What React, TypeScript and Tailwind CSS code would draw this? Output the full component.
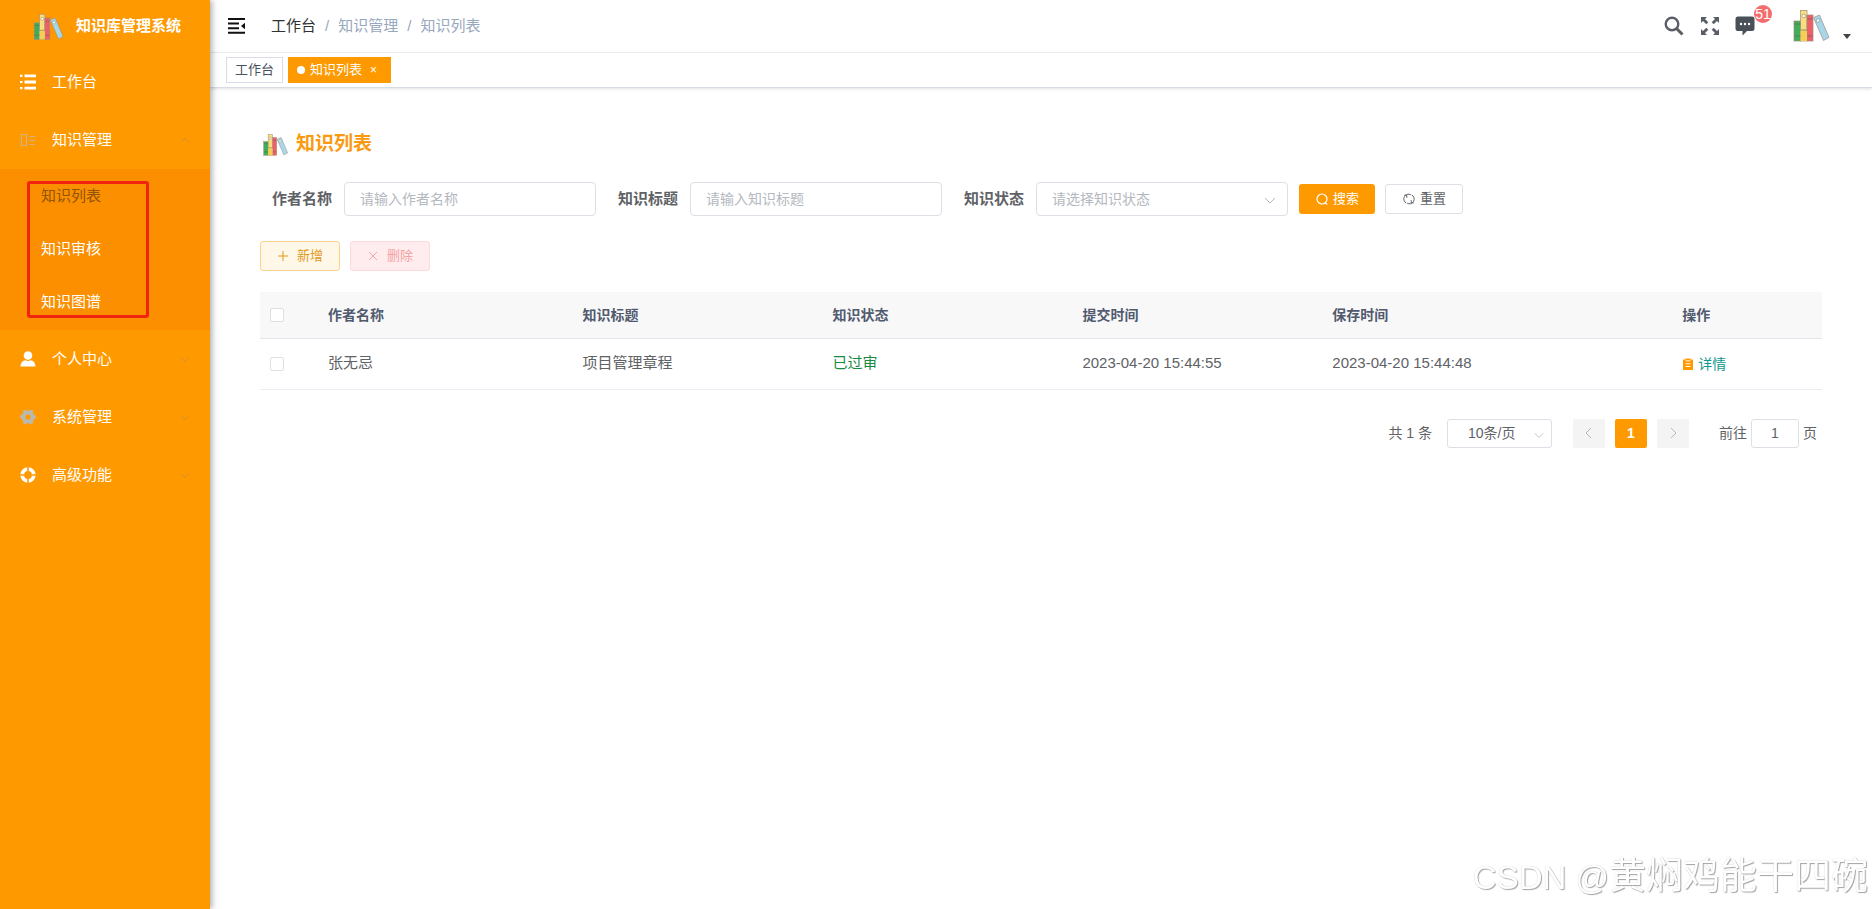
import { useState, type ReactNode } from "react";

function Books({ className }: { className: string }) {
  return (
    <svg viewBox="0 0 38 34" className={className} aria-hidden="true">
      <g stroke="#a08c7a" strokeWidth="0.7">
        <rect x="1" y="12" width="7" height="20" fill="#3fae5a" />
        <rect x="7.500" y="1.500" width="6.500" height="30.500" fill="#f7de7e" />
        <rect x="14" y="6" width="6" height="26" fill="#ee5f68" />
        <path d="M20.500 8.500 26.500 6l9.500 22.500-5.500 3Z" fill="#a6d8ea" />
      </g>
      <path d="M7.500 22h6.500v10H7.500Z" fill="#f3cf55" />
      <path d="M1.500 15h6M1.500 27h6M8 21h5.500M14.500 27h5M14.500 10h5" stroke="#6b6259" strokeWidth="0.700" />
      <circle cx="10.700" cy="7" r="1.800" fill="#fff" stroke="#a08c5a" strokeWidth="0.700" />
      <circle cx="25" cy="11.500" r="1.800" fill="#fff" stroke="#6d95a5" strokeWidth="0.700" />
    </svg>
  );
}

function ListIcon() {
  return (
    <svg viewBox="0 0 16 16" className="size-4" fill="#fff" aria-hidden="true">
      <path d="M0 .8h2.500v2.200H0zM4.500 .5h11.500v2.800H4.500zM0 6.900h2.500v2.200H0zM4.500 6.600h11.500v2.800H4.500zM0 13h2.500v2.200H0zM4.500 12.700h11.500v2.800H4.500z" />
    </svg>
  );
}

function PanelIcon() {
  return (
    <svg viewBox="0 0 16 16" className="size-4" fill="none" stroke="#d2b184" strokeWidth="1.200" aria-hidden="true">
      <path d="M1.500 2.500h5v11h-5zM9.500 4.500H15M9.500 8.500H15M9.500 12.500H15" />
    </svg>
  );
}

function UserIcon() {
  return (
    <svg viewBox="0 0 16 16" className="size-4" fill="#fff" aria-hidden="true">
      <circle cx="8" cy="4.500" r="4.300" />
      <path d="M.5 15.500c0-4 2.500-6 5-6.300 1.500 1 3.500 1 5 0 2.500.3 5 2.300 5 6.300Z" />
    </svg>
  );
}

function GearIcon() {
  return (
    <svg viewBox="0 0 16 16" className="size-4" aria-hidden="true">
      <circle cx="8" cy="8" r="4.500" fill="none" stroke="#b9b9ae" strokeWidth="4" />
      <circle cx="8" cy="8" r="6.600" fill="none" stroke="#b9b9ae" strokeWidth="2.400" strokeDasharray="3.456" strokeDashoffset="1.728" />
    </svg>
  );
}

function BuoyIcon() {
  return (
    <svg viewBox="0 0 16 16" className="size-4" aria-hidden="true">
      <circle cx="8" cy="8" r="5.800" fill="none" stroke="#fff" strokeWidth="3.800" />
      <path d="M8 0v4M8 12v4M0 8h4M12 8h4" stroke="#ff9900" strokeWidth="1.600" />
    </svg>
  );
}

function Chevron({ dir, className }: { dir: "up" | "down" | "left" | "right"; className: string }) {
  const paths = {
    up: "M1 9l5-5 5 5",
    down: "M1 4l5 5 5-5",
    left: "M8 1L3 6l5 5",
    right: "M4 1l5 5-5 5",
  };
  return (
    <svg viewBox="0 0 12 12" className={className} fill="none" stroke="currentColor" aria-hidden="true">
      <path d={paths[dir]} />
    </svg>
  );
}

function MenuRow({ icon, label, arrow }: { icon: ReactNode; label: string; arrow?: "up" | "down" }) {
  return (
    <a href="#" className="flex h-[58px] items-center px-5 text-[15px] text-white">
      <span className="mr-4 flex w-4 justify-center">{icon}</span>
      <span className="flex-1">{label}</span>
      {arrow && <Chevron dir={arrow} className="size-2.5 text-[#c99238]" />}
    </a>
  );
}

function Sidebar() {
  return (
    <aside className="z-10 w-[210px] shrink-0 bg-[#ff9900] shadow-[2px_0_6px_rgba(0,21,41,0.35)]">
      <a href="#" className="flex h-[53px] items-center pl-[33px] text-white">
        <Books className="mr-[11px] h-7 w-8" />
        <span className="text-[15px] font-bold">知识库管理系统</span>
      </a>
      <nav>
        <MenuRow icon={<ListIcon />} label="工作台" />
        <MenuRow icon={<PanelIcon />} label="知识管理" arrow="up" />
        <div className="relative bg-[#fb8f00] py-px text-[15px] text-white">
          <a href="#" className="flex h-[53px] items-center pl-[41px] text-[#8f5405]">知识列表</a>
          <a href="#" className="flex h-[53px] items-center pl-[41px]">知识审核</a>
          <a href="#" className="flex h-[53px] items-center pl-[41px]">知识图谱</a>
          <div className="pointer-events-none absolute top-3 left-[27px] h-[137px] w-[122px] rounded-[3px] border-3 border-[#f0240f]" />
        </div>
        <MenuRow icon={<UserIcon />} label="个人中心" arrow="down" />
        <MenuRow icon={<GearIcon />} label="系统管理" arrow="down" />
        <MenuRow icon={<BuoyIcon />} label="高级功能" arrow="down" />
      </nav>
    </aside>
  );
}

function TopBar() {
  return (
    <header className="flex h-[53px] items-center border-b border-[#f0f0f0] pr-[21px] pl-[18px]">
      <button aria-label="折叠菜单">
        <svg viewBox="0 0 18 16" className="h-4 w-[18px]" fill="#111" aria-hidden="true">
          <path d="M0 0h17v2H0zM0 4.600h11v2H0zM0 9.200h11v2H0zM0 13.800h17v2H0zM17 4.800v6.400L13 8z" />
        </svg>
      </button>
      <nav className="ml-[25px] flex items-center gap-[9px] text-[15px] text-[#97a8be]">
        <a href="#" className="text-[#303133]">工作台</a>
        <span>/</span>
        <span>知识管理</span>
        <span>/</span>
        <span>知识列表</span>
      </nav>
      <div className="ml-auto flex items-center text-[#5a5e66]">
        <button aria-label="搜索">
          <svg viewBox="0 0 20 20" className="size-5" fill="none" stroke="currentColor" aria-hidden="true">
            <circle cx="8" cy="8" r="6.300" strokeWidth="2.400" />
            <path d="M12.500 12.500l6 6" strokeWidth="3" />
          </svg>
        </button>
        <button aria-label="全屏" className="ml-4">
          <svg viewBox="0 0 20 20" className="size-5" fill="currentColor" aria-hidden="true">
            <path d="M1 1h6L5 3l3.300 3.300-2 2L3 5 1 7zM19 1v6l-2-2-3.300 3.300-2-2L15 3l-2-2zM1 19v-6l2 2 3.300-3.300 2 2L5 17l2 2zM19 19h-6l2-2-3.300-3.300 2-2L17 15l2-2z" />
          </svg>
        </button>
        <button aria-label="消息" className="relative ml-[15px]">
          <svg viewBox="0 0 20 20" className="size-5" aria-hidden="true">
            <path d="M3 .5h14a2.500 2.500 0 0 1 2.500 2.500v9.500A2.500 2.500 0 0 1 17 15h-5l-4.500 4.500V15H3A2.500 2.500 0 0 1 .5 12.500V3A2.500 2.500 0 0 1 3 .5Z" fill="#4a5058" />
            <g fill="#fff">
              <circle cx="6" cy="8" r="1.200" />
              <circle cx="10" cy="8" r="1.200" />
              <circle cx="14" cy="8" r="1.200" />
            </g>
          </svg>
          <span className="absolute -top-[11px] left-[19px] flex size-[18px] items-center justify-center rounded-full bg-[#f56c6c] text-sm text-white">51</span>
        </button>
        <button aria-label="用户菜单" className="ml-[38px] flex items-end gap-3">
          <Books className="h-[34px] w-[38px]" />
          <svg viewBox="0 0 8 5" className="mb-1 h-[5px] w-2" fill="#444" aria-hidden="true">
            <path d="M0 0h8L4 5z" />
          </svg>
        </button>
      </div>
    </header>
  );
}

function Tabs() {
  return (
    <div className="flex h-[35px] items-center gap-[5px] border-b border-[#d8dce5] pl-4 text-[13px] shadow-[0_1px_3px_rgba(0,0,0,0.12)]">
      <a href="#" className="flex h-[26px] items-center border border-[#d8dce5] px-2 text-[#495060]">工作台</a>
      <a href="#" className="flex h-[26px] items-center bg-[#ff9900] pr-3.5 pl-[9px] text-white">
        <span className="mr-[5px] size-2 rounded-full bg-white" />
        知识列表
        <span className="ml-2 text-xs">×</span>
      </a>
    </div>
  );
}

function TextField({ id, label, placeholder }: { id: string; label: string; placeholder: string }) {
  return (
    <div className="flex items-center gap-3">
      <label htmlFor={id} className="text-[15px] font-bold text-[#606266]">{label}</label>
      <input id={id} placeholder={placeholder} className="h-[34px] w-[252px] rounded border border-[#dcdfe6] px-[15px] text-sm outline-none placeholder:text-[#b4b8c0]" />
    </div>
  );
}

function Filters() {
  return (
    <form className="flex flex-wrap items-center pl-3" onSubmit={(e) => e.preventDefault()}>
      <div className="flex flex-wrap items-center gap-[22px]">
        <TextField id="author" label="作者名称" placeholder="请输入作者名称" />
        <TextField id="title" label="知识标题" placeholder="请输入知识标题" />
        <div className="flex items-center gap-3">
          <label htmlFor="status" className="text-[15px] font-bold text-[#606266]">知识状态</label>
          <div className="relative">
            <select id="status" className="h-[34px] w-[252px] appearance-none rounded border border-[#dcdfe6] bg-white px-[15px] text-sm text-[#b4b8c0] outline-none">
              <option>请选择知识状态</option>
              <option>已过审</option>
            </select>
            <Chevron dir="down" className="pointer-events-none absolute top-3 right-3 size-3 text-[#b4b8c0]" />
          </div>
        </div>
      </div>
      <button className="ml-[11px] flex h-[30px] items-center gap-1 rounded-[3px] bg-[#ff9900] px-4 text-[13px] text-white">
        <svg viewBox="0 0 14 14" className="size-3.5" fill="none" stroke="currentColor" strokeWidth="1.200" aria-hidden="true">
          <circle cx="7" cy="7" r="5" />
          <path d="M10 10.500l2.200 2" />
        </svg>
        搜索
      </button>
      <button type="reset" className="ml-[10px] flex h-[30px] items-center gap-1 rounded-[3px] border border-[#dcdfe6] bg-white px-4 text-[13px] text-[#606266]">
        <svg viewBox="0 0 14 14" className="size-3.5" fill="none" stroke="currentColor" aria-hidden="true">
          <path d="M4.200 11A4.600 4.600 0 0 1 8.800 2.800M2.200 3.200h2.600v2.600M9.800 3A4.600 4.600 0 0 1 5.200 11.200M11.800 10.800H9.200V8.200" />
        </svg>
        重置
      </button>
    </form>
  );
}

function Actions() {
  return (
    <div className="mt-[25px] flex gap-[10px] text-[13px]">
      <button className="flex h-[30px] items-center gap-2 rounded-[3px] border border-[#fbd48c] bg-[#fff7e8] px-4 text-[#e09a1c]">
        <svg viewBox="0 0 12 12" className="size-3" fill="none" stroke="currentColor" aria-hidden="true">
          <path d="M6 1v10M1 6h10" />
        </svg>
        新增
      </button>
      <button disabled className="flex h-[30px] items-center gap-2 rounded-[3px] border border-[#fbd9dc] bg-[#feecee] px-4 text-[#f5a3a5]">
        <svg viewBox="0 0 12 12" className="size-3" fill="none" stroke="currentColor" aria-hidden="true">
          <path d="M2 2l8 8M10 2l-8 8" />
        </svg>
        删除
      </button>
    </div>
  );
}

const rows = [
  { author: "张无忌", title: "项目管理章程", status: "已过审", submitted: "2023-04-20 15:44:55", saved: "2023-04-20 15:44:48" },
];

function KnowledgeTable() {
  const box = "block size-[14px] appearance-none rounded-[2px] border border-[#dcdfe6] bg-white";
  return (
    <table className="mt-[21px] w-full table-fixed text-left text-[15px] text-[#606266]">
      <colgroup>
        <col className="w-[58px]" />
        <col className="w-[16.3%]" />
        <col className="w-[16%]" />
        <col className="w-[16%]" />
        <col className="w-[16%]" />
        <col className="w-[22.4%]" />
        <col />
      </colgroup>
      <thead>
        <tr className="h-[46px] border-b border-[#e3e6ec] bg-[#f8f8f9] text-sm text-[#515a6e]">
          <th className="px-[10px]"><input type="checkbox" aria-label="全选" className={box} /></th>
          <th className="px-[10px]">作者名称</th>
          <th className="px-[10px]">知识标题</th>
          <th className="px-[10px]">知识状态</th>
          <th className="px-[10px]">提交时间</th>
          <th className="px-[10px]">保存时间</th>
          <th className="px-[10px]">操作</th>
        </tr>
      </thead>
      <tbody>
        {rows.map((r) => (
          <tr key={r.submitted} className="h-[51px] border-b border-[#e9ecf2]">
            <td className="px-[10px]"><input type="checkbox" aria-label={r.title} className={box} /></td>
            <td className="px-[10px]">{r.author}</td>
            <td className="px-[10px]">{r.title}</td>
            <td className="px-[10px] text-[#1b8a45]">{r.status}</td>
            <td className="px-[10px]">{r.submitted}</td>
            <td className="px-[10px]">{r.saved}</td>
            <td className="px-[10px]">
              <a href="#" className="flex items-center gap-1 text-sm text-[#11998e]">
                <svg viewBox="0 0 12 12" className="size-3" aria-hidden="true">
                  <path d="M1 1.500h2.500V.5h5v1H11V12H1z" fill="#ff9900" />
                  <path d="M3.500 2.800h5M3.500 5.800h5M3.500 8.500h5" stroke="#fff" strokeWidth="0.900" />
                </svg>
                详情
              </a>
            </td>
          </tr>
        ))}
      </tbody>
    </table>
  );
}

function Pagination() {
  const [page, setPage] = useState("1");
  return (
    <div className="mt-[29px] flex items-center justify-end pr-[5px] text-sm text-[#606266]">
      <span className="mr-[15px]">共 1 条</span>
      <div className="relative mr-[21px]">
        <select aria-label="每页条数" className="h-[29px] w-[105px] appearance-none rounded-[3px] border border-[#dcdfe6] bg-white pl-5 outline-none">
          <option>10条/页</option>
          <option>20条/页</option>
        </select>
        <Chevron dir="down" className="pointer-events-none absolute top-[11px] right-2 size-2.5 text-[#b4b8c0]" />
      </div>
      <div className="flex gap-[10px]">
        <button disabled aria-label="上一页" className="flex h-[29px] w-8 items-center justify-center rounded-[2px] bg-[#f4f4f5] text-[#b4b8c0]">
          <Chevron dir="left" className="size-3" />
        </button>
        <button className="h-[29px] w-8 rounded-[2px] bg-[#ff9900] font-bold text-white">1</button>
        <button disabled aria-label="下一页" className="flex h-[29px] w-8 items-center justify-center rounded-[2px] bg-[#f4f4f5] text-[#b4b8c0]">
          <Chevron dir="right" className="size-3" />
        </button>
      </div>
      <label htmlFor="page" className="ml-[30px]">前往</label>
      <input id="page" value={page} onChange={(e) => setPage(e.target.value)} className="mx-1 h-[29px] w-12 rounded-[3px] border border-[#dcdfe6] text-center outline-none" />
      <span>页</span>
    </div>
  );
}

export default function App() {
  return (
    <div className="flex min-h-screen bg-white font-['Liberation_Sans','Noto_Sans_CJK_SC',sans-serif]">
      <Sidebar />
      <div className="min-w-0 flex-1">
        <TopBar />
        <Tabs />
        <main className="px-[50px] pt-[41px]">
          <h1 className="mb-[22px] flex h-[31px] items-center gap-[7px] pl-[3px] text-[19px] font-bold text-[#f99a11]">
            <Books className="h-6 w-[26px]" />
            知识列表
          </h1>
          <Filters />
          <Actions />
          <KnowledgeTable />
          <Pagination />
        </main>
      </div>
      <div className="pointer-events-none fixed right-1 bottom-[7px] flex items-baseline text-[37px] leading-12 text-white [text-shadow:1px_1px_1px_#a4a4a4,0_0_1px_#c4c4c4]">
        <span className="text-[33px]">CSDN @</span>黄焖鸡能干四碗
      </div>
    </div>
  );
}
